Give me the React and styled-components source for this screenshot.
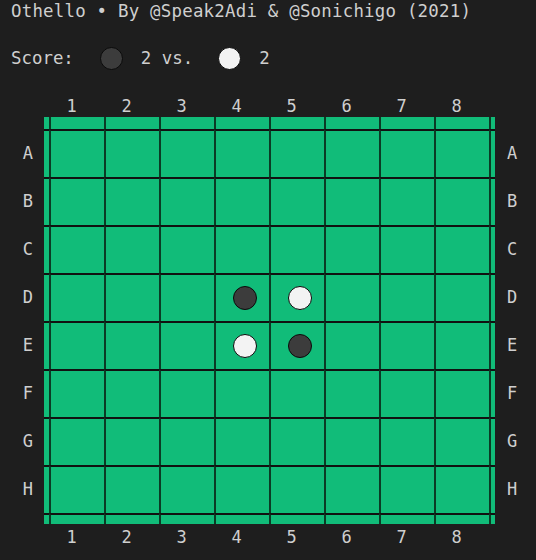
import React from 'react'
import styled, { createGlobalStyle } from 'styled-components'

const GlobalStyle = createGlobalStyle`
    html, body {
        margin: 0;
        background: #1e1e1e;
    }
    body {
        font-family: "DejaVu Sans Mono", "Liberation Mono", monospace;
        color: #cfcfcf;
    }
`

const Page = styled.main`
    width: 536px;
    height: 560px;
    overflow: hidden;
`

const Title = styled.h1`
    margin: 0;
    padding: 0 0 0 11px;
    font-size: 17.4px;
    letter-spacing: 0.23px;
    font-weight: 400;
    line-height: 22px;
`

const Score = styled.div`
    display: flex;
    align-items: center;
    height: 26px;
    margin-top: 23px;
    padding-left: 11px;
    font-size: 17.4px;
    white-space: pre;
    .label {
        margin-right: 26px;
    }
    .count {
        margin: 0 25px 0 18px;
    }
`

const Disc = styled.span`
    display: inline-block;
    width: ${(p) => p.size}px;
    height: ${(p) => p.size}px;
    border-radius: 50%;
    box-sizing: border-box;
    border: 1.5px solid #0a0a0a;
    background: ${(p) => (p.white ? '#f3f3f3' : '#3c3c3c')};
`

const BoardArea = styled.section`
    display: grid;
    grid-template-columns: 44px 451px 41px;
    grid-template-rows: 23px 407px 26px;
    margin-top: 23px;
`

const ColLabels = styled.div`
    grid-column: 2;
    grid-row: ${(p) => p.row};
    display: grid;
    grid-template-columns: repeat(8, 55px);
    align-items: center;
    font-size: 17px;
    text-align: center;
`

const RowLabels = styled.div`
    grid-column: ${(p) => p.col};
    grid-row: 2;
    display: grid;
    grid-template-rows: repeat(8, 48px);
    padding-top: 12px;
    font-size: 17px;
    span {
        display: flex;
        align-items: center;
        justify-content: ${(p) => (p.col === 1 ? 'flex-end' : 'flex-start')};
        padding: ${(p) => (p.col === 1 ? '0 11px 0 0' : '0 0 0 12px')};
    }
`

// edge tracks carry the grid lines out to the rim of the board
const Board = styled.div`
    grid-column: 2;
    grid-row: 2;
    display: grid;
    grid-template-columns: 5px repeat(8, 55px) 6px;
    grid-template-rows: 12px repeat(8, 48px) 11px;
    background: #11bc79;
`

const Cell = styled.div`
    display: flex;
    align-items: center;
    justify-content: center;
    padding-left: 4px;
    border-left: ${(p) => (p.left ? '2px solid #0b3b25' : 'none')};
    border-top: ${(p) => (p.top ? '2px solid #111' : 'none')};
`

const cols = ['1', '2', '3', '4', '5', '6', '7', '8']
const rows = ['A', 'B', 'C', 'D', 'E', 'F', 'G', 'H']
const start = { D4: 'black', D5: 'white', E4: 'white', E5: 'black' }
const track = [0, 1, 2, 3, 4, 5, 6, 7, 8, 9]

const App = () => {
    return (
        <Page>
            <GlobalStyle />
            <Title>Othello • By @Speak2Adi &amp; @Sonichigo (2021)</Title>
            <Score>
                <span className="label">Score:</span>
                <Disc size={23} />
                <span className="count">2 vs.</span>
                <Disc size={23} white />
                <span className="count">2</span>
            </Score>
            <BoardArea>
                <ColLabels row={1}>
                    {cols.map((c) => (
                        <span key={c}>{c}</span>
                    ))}
                </ColLabels>
                <RowLabels col={1}>
                    {rows.map((r) => (
                        <span key={r}>{r}</span>
                    ))}
                </RowLabels>
                <Board>
                    {track.map((ri) =>
                        track.map((ci) => {
                            const inside = ri > 0 && ri < 9 && ci > 0 && ci < 9
                            const piece = inside
                                ? start[rows[ri - 1] + cols[ci - 1]]
                                : null
                            return (
                                <Cell
                                    key={ri + '-' + ci}
                                    left={ci > 0}
                                    top={ri > 0}
                                >
                                    {piece && (
                                        <Disc
                                            size={24}
                                            white={piece === 'white'}
                                        />
                                    )}
                                </Cell>
                            )
                        })
                    )}
                </Board>
                <RowLabels col={3}>
                    {rows.map((r) => (
                        <span key={r}>{r}</span>
                    ))}
                </RowLabels>
                <ColLabels row={3}>
                    {cols.map((c) => (
                        <span key={c}>{c}</span>
                    ))}
                </ColLabels>
            </BoardArea>
        </Page>
    )
}

export default App
